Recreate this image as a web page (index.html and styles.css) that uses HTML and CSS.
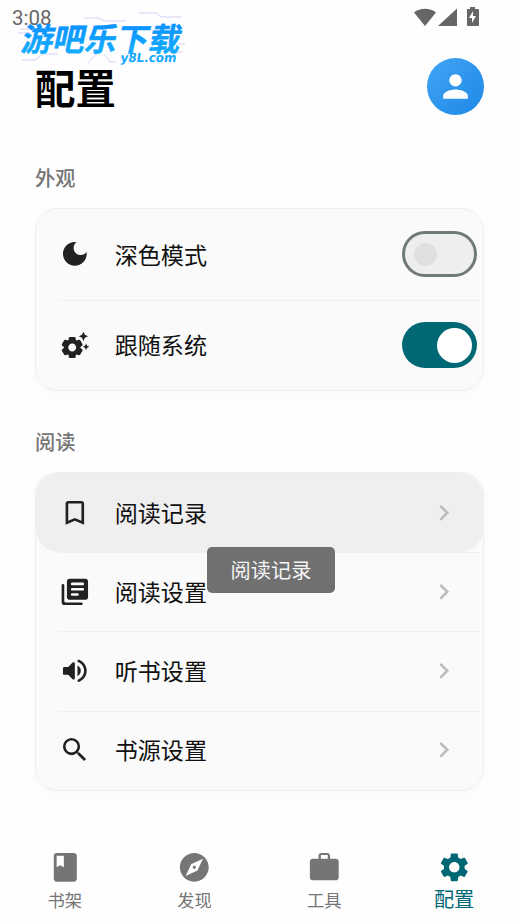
FILE: index.html
```html
<!DOCTYPE html>
<html lang="zh-CN">
<head>
<meta charset="utf-8">
<meta name="viewport" content="width=device-width, initial-scale=1">
<title>配置</title>
<link rel="stylesheet" href="styles.css">
</head>
<body>
<div class="status">
  <span class="clock">3:08</span>
  <svg class="status-icons" width="66" height="20" viewBox="0 0 66 20">
    <path d="M0 5.500C6 .5 16 .5 22 5.500L11 19z"/>
    <path d="M43 1.500V19H24z"/>
    <path fill-rule="evenodd" d="M56 0h5v2h3q1 0 1 1v15q0 1-1 1H54q-1 0-1-1V3q0-1 1-1h2zM59 4l-4 7h3v5l4-7h-3z"/>
  </svg>
</div>
<svg class="brand" width="200" height="74" viewBox="0 0 200 74">
  <defs>
    <linearGradient id="ink" x1="0" y1="0" x2="0" y2="1"><stop offset="0" stop-color="#0788ff"/><stop offset="1" stop-color="#16b3ff"/></linearGradient>
  </defs>
  <g class="circuit">
    <path d="M84 18h15l5 3h22M139 13h17l5 4h20M20 29h10M18 33h13M22 60h13l8-6h15M88 63l12-13M104 54l6 8h6M168 61l10-9h5M178 44h7"/>
  </g>
  <text class="brand-name" transform="translate(20 50.500) skewX(-12) scale(1.12 1)" x="0" y="0" textLength="142" lengthAdjust="spacingAndGlyphs">游吧乐下载</text>
  <text class="brand-site" transform="translate(120 61.500) skewX(-8)" x="0" y="0" textLength="56" lengthAdjust="spacingAndGlyphs">y8L.com</text>
</svg>
<header class="header">
  <h1>配置</h1>
  <div class="avatar"><svg width="37" height="37" viewBox="0 0 24 24"><path d="M12 12c2.21 0 4-1.79 4-4s-1.79-4-4-4-4 1.79-4 4 1.79 4 4 4zm0 2c-2.67 0-8 1.34-8 4v2h16v-2c0-2.66-5.33-4-8-4z"/></svg></div>
</header>
<main>
  <h2>外观</h2>
  <section class="card appearance">
    <div class="row">
      <svg class="icon" viewBox="0 0 24 24"><path d="M12 3c-4.97 0-9 4.03-9 9s4.03 9 9 9 9-4.03 9-9c0-.46-.04-.92-.1-1.36-.98 1.37-2.58 2.26-4.4 2.26-2.98 0-5.4-2.42-5.4-5.4 0-1.81.89-3.42 2.26-4.4-.44-.06-.9-.1-1.36-.1z"/></svg>
      <span class="label">深色模式</span><span class="switch"></span>
    </div>
    <div class="row">
      <svg class="icon" viewBox="0 0 24 24"><path d="M17.41 6.59 15 5.5l2.41-1.09L18.5 2l1.09 2.41L22 5.5l-2.41 1.09L18.5 9zM21.28 12.72 20.5 11l-.78 1.72-1.72.78 1.72.78.78 1.72.78-1.72L23 13.5zM16.24 14.37l1.23.93c.4.3.51.86.26 1.3l-1.62 2.8c-.25.44-.79.62-1.25.42l-1.43-.6c-.2.13-.42.26-.64.37l-.19 1.54c-.06.5-.49.87-.99.87H8.38c-.5 0-.93-.37-.99-.87l-.19-1.54c-.22-.11-.43-.23-.64-.37l-1.43.6c-.46.2-1 .02-1.25-.42l-1.62-2.8c-.25-.44-.14-1 .26-1.3l1.23-.93a6.7 6.7 0 0 1 0-.74l-1.23-.93c-.4-.3-.51-.86-.26-1.3l1.62-2.8c.25-.44.79-.62 1.25-.42l1.43.6c.2-.13.42-.26.64-.37l.19-1.54c.06-.5.49-.87.99-.87h3.23c.5 0 .93.37.99.87l.19 1.54c.22.11.43.23.64.37l1.43-.6c.46-.2 1-.02 1.25.42l1.62 2.8c.25.44.14 1-.26 1.3l-1.23.93a6.7 6.7 0 0 1 0 .74zM13 14c0-1.66-1.34-3-3-3s-3 1.34-3 3 1.34 3 3 3 3-1.34 3-3z"/></svg>
      <span class="label">跟随系统</span><span class="switch on"></span>
    </div>
  </section>
  <h2 class="second">阅读</h2>
  <section class="card reading">
    <div class="row pressed">
      <svg class="icon" viewBox="0 0 24 24"><path d="M17 3H7c-1.1 0-2 .9-2 2v16l7-3 7 3V5c0-1.1-.9-2-2-2zm0 15-5-2.18L7 18V5h10v13z"/></svg>
      <span class="label">阅读记录</span>
      <svg class="chevron" viewBox="0 0 24 24"><path d="M10 6 8.59 7.41 13.17 12l-4.58 4.59L10 18l6-6z"/></svg>
      <div class="tooltip">阅读记录</div>
    </div>
    <div class="row">
      <svg class="icon" viewBox="0 0 24 24"><path d="M3 6c-.55 0-1 .45-1 1v13c0 1.1.9 2 2 2h13c.55 0 1-.45 1-1s-.45-1-1-1H5c-.55 0-1-.45-1-1V7c0-.55-.45-1-1-1zm17-4H8c-1.1 0-2 .9-2 2v12c0 1.1.9 2 2 2h12c1.1 0 2-.9 2-2V4c0-1.1-.9-2-2-2zm-2 9h-8c-.55 0-1-.45-1-1s.45-1 1-1h8c.55 0 1 .45 1 1s-.45 1-1 1zm-4 4h-4c-.55 0-1-.45-1-1s.45-1 1-1h4c.55 0 1 .45 1 1s-.45 1-1 1zm4-8h-8c-.55 0-1-.45-1-1s.45-1 1-1h8c.55 0 1 .45 1 1s-.45 1-1 1z"/></svg>
      <span class="label">阅读设置</span>
      <svg class="chevron" viewBox="0 0 24 24"><path d="M10 6 8.59 7.41 13.17 12l-4.58 4.59L10 18l6-6z"/></svg>
    </div>
    <div class="row">
      <svg class="icon" viewBox="0 0 24 24"><path d="M3 10v4c0 .55.45 1 1 1h3l3.29 3.29c.63.63 1.71.18 1.71-.71V6.41c0-.89-1.08-1.34-1.71-.71L7 9H4c-.55 0-1 .45-1 1zm13.5 2A4.5 4.5 0 0 0 14 7.97v8.05c1.48-.73 2.5-2.25 2.5-4.02zM14 4.45v.2c0 .38.25.71.6.85C17.18 6.53 19 9.06 19 12s-1.82 5.47-4.4 6.5c-.36.14-.6.47-.6.85v.2c0 .63.63 1.07 1.21.85C18.6 19.11 21 15.84 21 12s-2.4-7.11-5.79-8.4c-.58-.23-1.21.22-1.21.85z"/></svg>
      <span class="label">听书设置</span>
      <svg class="chevron" viewBox="0 0 24 24"><path d="M10 6 8.59 7.41 13.17 12l-4.58 4.59L10 18l6-6z"/></svg>
    </div>
    <div class="row">
      <svg class="icon" viewBox="0 0 24 24"><path d="M15.5 14h-.79l-.28-.27A6.47 6.47 0 0 0 16 9.5 6.5 6.5 0 1 0 9.5 16c1.61 0 3.09-.59 4.23-1.57l.27.28v.79l5 4.99L20.49 19l-4.99-5zm-6 0C7.01 14 5 11.99 5 9.5S7.01 5 9.5 5 14 7.01 14 9.5 11.99 14 9.5 14z"/></svg>
      <span class="label">书源设置</span>
      <svg class="chevron" viewBox="0 0 24 24"><path d="M10 6 8.59 7.41 13.17 12l-4.58 4.59L10 18l6-6z"/></svg>
    </div>
  </section>
</main>
<nav class="nav">
  <div class="tab"><svg viewBox="0 0 24 24"><path fill-rule="evenodd" d="M18 2H6c-1.1 0-2 .9-2 2v16c0 1.1.9 2 2 2h12c1.1 0 2-.9 2-2V4c0-1.1-.9-2-2-2zM6 4h5v8l-2.5-1.5L6 12V4z"/></svg><span>书架</span></div>
  <div class="tab"><svg viewBox="0 0 24 24"><path d="M12 10.9c-.61 0-1.1.49-1.1 1.1s.49 1.1 1.1 1.1c.61 0 1.1-.49 1.1-1.1s-.49-1.1-1.1-1.1zM12 2C6.48 2 2 6.48 2 12s4.48 10 10 10 10-4.48 10-10S17.52 2 12 2zm2.19 12.19L6 18l3.81-8.19L18 6l-3.81 8.19z"/></svg><span>发现</span></div>
  <div class="tab"><svg viewBox="0 0 24 24"><path fill-rule="evenodd" d="M20 6h-4V4c0-1.1-.9-2-2-2h-4c-1.1 0-2 .9-2 2v2H4c-1.1 0-2 .9-2 2v11c0 1.1.9 2 2 2h16c1.1 0 2-.9 2-2V8c0-1.1-.9-2-2-2zm-5.600 0H9.600V3.400h4.800z"/></svg><span>工具</span></div>
  <div class="tab active"><svg viewBox="0 0 24 24"><path d="M19.14 12.94c.04-.3.06-.61.06-.94 0-.32-.02-.64-.07-.94l2.03-1.58c.18-.14.23-.41.12-.61l-1.92-3.32c-.12-.22-.37-.29-.59-.22l-2.39.96c-.5-.38-1.03-.7-1.62-.94l-.36-2.54c-.04-.24-.24-.41-.48-.41h-3.84c-.24 0-.43.17-.47.41l-.36 2.54c-.59.24-1.13.57-1.62.94l-2.39-.96c-.22-.08-.47 0-.59.22L2.74 8.87c-.12.21-.08.47.12.61l2.03 1.58c-.05.3-.09.63-.09.94s.02.64.07.94l-2.03 1.58c-.18.14-.23.41-.12.61l1.92 3.32c.12.22.37.29.59.22l2.39-.96c.5.38 1.03.7 1.62.94l.36 2.54c.05.24.24.41.48.41h3.84c.24 0 .44-.17.47-.41l.36-2.54c.59-.24 1.13-.56 1.62-.94l2.39.96c.22.08.47 0 .59-.22l1.92-3.32c.12-.22.07-.47-.12-.61l-2.01-1.58zM12 15.6c-1.98 0-3.6-1.62-3.6-3.6s1.62-3.6 3.6-3.6 3.6 1.62 3.6 3.6-1.62 3.6-3.6 3.6z"/></svg><span>配置</span></div>
</nav>
</body>
</html>
```
FILE: styles.css
```css
* { box-sizing: border-box; }
body {
  margin: 0;
  height: 923px;
  display: flex;
  flex-direction: column;
  overflow: hidden;
  background: #fefefe;
  color: #111;
  font-family: "Noto Sans CJK SC", sans-serif;
}
svg { display: block; flex: none; }
.status {
  height: 35px;
  padding: 6px 40px 0 12px;
  display: flex;
  justify-content: space-between;
  color: #666;
}
.clock { font: 20.5px/24px Roboto, sans-serif; }
.status-icons { fill: #666; margin-top: 1px; margin-right: -1px; }
.brand { position: absolute; left: 0; top: 0; overflow: visible; }
.circuit { fill: none; stroke: #d5d0f5; stroke-width: 1; }
.brand-name { font-size: 32px; font-weight: 700; fill: url(#ink); stroke: url(#ink); stroke-width: .4; }
.brand-site { font: bold 12.5px "DejaVu Sans", sans-serif; fill: #16a9ff; }
.header {
  height: 102px;
  padding: 23px 35px 0;
  display: flex;
  justify-content: space-between;
}
h1 { margin: 0; font-size: 40.4px; line-height: 58px; font-weight: 700; color: #000; }
.avatar {
  width: 57px;
  height: 57px;
  border-radius: 50%;
  display: grid;
  place-items: center;
  background: linear-gradient(135deg, #42a5f5, #1e88e5);
}
.avatar svg { fill: #fff; }
main { padding: 26px 35px 0; flex: 1; }
h2 { margin: 0; height: 45px; font-size: 20.2px; line-height: 29px; font-weight: 500; color: #757575; }
h2.second { margin-top: 36px; }
.card {
  border: 1px solid #eeeeee;
  border-radius: 23px;
  background: #fafafa;
  box-shadow: 0 3px 14px rgba(0, 0, 0, .025);
}
.appearance { height: 182.5px; }
.reading { height: 318.5px; margin-top: .5px; }
.row {
  position: relative;
  display: flex;
  align-items: center;
  padding: 0 6px 0 23px;
}
.appearance .row { height: 90.5px; }
.reading .row { height: 79.2px; }
.row + .row::before {
  content: "";
  position: absolute;
  left: 23px;
  right: 0;
  top: 0;
  border-top: 1px solid #f0f0f0;
}
.reading .row { padding-right: 23px; }
.pressed { background: #efefef; border-radius: 23px; }
.icon { width: 31.7px; height: 31.7px; fill: #212121; }
.label { margin: -2px 0 0 24px; flex: 1; font-size: 23.1px; line-height: 34px; }
.appearance .label { margin-top: -1px; }
.chevron { width: 31.7px; height: 31.7px; fill: #bdbdbd; }
.switch {
  width: 75px;
  height: 46px;
  border: 3px solid #6f7979;
  border-radius: 23px;
  padding: 9px;
  background: #eee;
}
.switch::before {
  content: "";
  display: block;
  width: 23px;
  height: 23px;
  border-radius: 50%;
  background: #e0e0e0;
}
.switch.on { padding: 6px 5px; border: 0; background: #006874; }
.switch.on::before { width: 35px; height: 35px; margin-left: auto; background: #fff; }
.tooltip {
  position: absolute;
  z-index: 1;
  left: 171px;
  top: 74px;
  width: 128px;
  height: 46px;
  border-radius: 5px;
  background: #707070;
  color: #f5f5f5;
  font-size: 20.2px;
  line-height: 46px;
  text-align: center;
}
.nav {
  height: 84px;
  display: flex;
  background: #fefefe;
  box-shadow: 0 -1px 3px rgba(0, 0, 0, .02);
}
.tab {
  flex: 1;
  display: flex;
  flex-direction: column;
  align-items: center;
  padding-top: 11px;
  color: #757575;
  font-size: 17.3px;
  line-height: 30px;
}
.tab svg { width: 34.6px; height: 34.6px; fill: currentColor; }
.tab.active { color: #006874; font-size: 20.2px; }
.tab.active span { margin-top: -1px; }
```
